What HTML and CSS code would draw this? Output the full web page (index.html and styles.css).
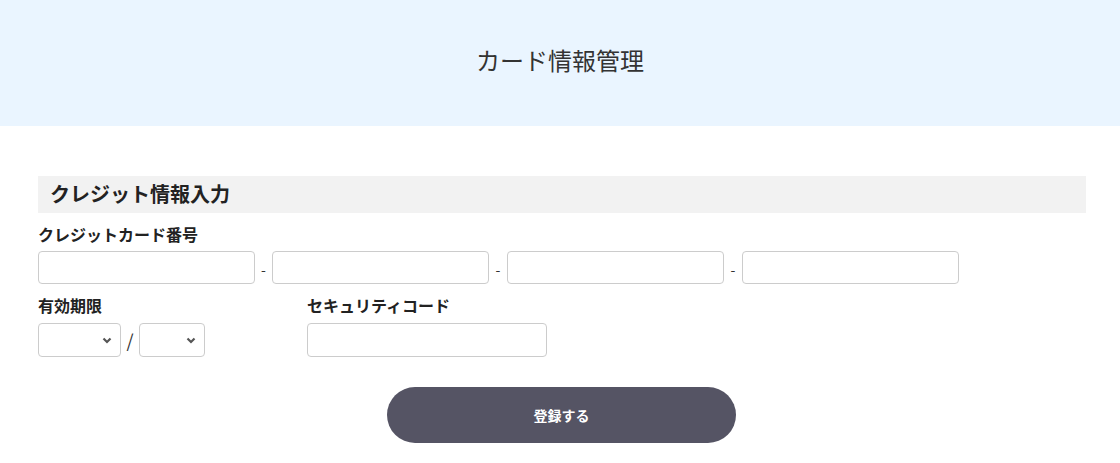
FILE: index.html
```html
<!DOCTYPE html>
<html lang="ja">
<head>
    <meta charset="UTF-8">
    <title>カード情報管理</title>
    <link rel="stylesheet" href="styles.css">
</head>
<body>
<div id="header">
    <h1>カード情報管理</h1>
</div>
<div id="content">
    <h2 class="section-title">クレジット情報入力</h2>
    <div class="field">
        <label class="label">クレジットカード番号</label>
        <div class="card-row">
            <input type="text" class="text-input card-input">
            <span class="sep">-</span>
            <input type="text" class="text-input card-input">
            <span class="sep">-</span>
            <input type="text" class="text-input card-input">
            <span class="sep">-</span>
            <input type="text" class="text-input card-input">
        </div>
    </div>
    <div class="field-row">
        <div class="field expiry">
            <label class="label">有効期限</label>
            <div class="expiry-row">
                <select class="select month"><option></option></select>
                <span class="slash">/</span>
                <select class="select year"><option></option></select>
            </div>
        </div>
        <div class="field">
            <label class="label">セキュリティコード</label>
            <input type="text" class="text-input code-input">
        </div>
    </div>
    <div class="actions">
        <button class="submit">登録する</button>
    </div>
</div>
</body>
</html>
```
FILE: styles.css
```css
* {
    margin: 0;
    padding: 0;
    box-sizing: border-box;
}

body {
    font-family: "Noto Sans CJK JP", "Noto Sans", sans-serif;
    color: #222;
    background-color: #fff;
}

#header {
    height: 126px;
    background-color: #eaf5ff;
    display: flex;
    align-items: center;
    justify-content: center;
    padding-bottom: 8px;
}

#header h1 {
    font-size: 24px;
    font-weight: 400;
    color: #333;
}

#content {
    padding: 50px 34px 20px 38px;
}

.section-title {
    height: 37px;
    line-height: 35px;
    background-color: #f2f2f2;
    font-size: 20px;
    font-weight: 700;
    padding-left: 12px;
    color: #222;
}

.field {
    margin-top: 9px;
}

.label {
    display: block;
    font-size: 16px;
    font-weight: 700;
    line-height: 24px;
    margin-bottom: 5px;
}

.card-row {
    display: flex;
    align-items: center;
}

.text-input {
    height: 33px;
    border: 1px solid #ccc;
    border-radius: 4px;
    background-color: #fff;
    padding: 0 8px;
    font-size: 14px;
}

.card-input {
    width: 217px;
}

.sep {
    width: 17px;
    text-align: center;
    font-size: 14px;
    color: #333;
    padding-top: 2px;
}

.card-row .sep:nth-of-type(2),
.card-row .sep:nth-of-type(3) {
    width: 18px;
}

.field-row {
    display: flex;
}

.field-row .field:first-child {
    width: 269px;
}

.field-row .label {
    margin-bottom: 6px;
}

.expiry-row {
    display: flex;
    align-items: center;
}

.select {
    height: 34px;
    border: 1px solid #ccc;
    border-radius: 4px;
    background-color: #fff;
    font-size: 14px;
    appearance: none;
    -webkit-appearance: none;
    background-image: url("data:image/svg+xml,%3Csvg xmlns='http://www.w3.org/2000/svg' width='10' height='7' viewBox='0 0 10 7'%3E%3Cpath d='M1.5 1.5l3.5 3.5 3.5-3.5' fill='none' stroke='%23555' stroke-width='2.2'/%3E%3C/svg%3E");
    background-repeat: no-repeat;
    background-position: right 8px center;
}

.month {
    width: 83px;
}

.year {
    width: 66px;
}

.slash {
    width: 18px;
    text-align: center;
    font-size: 18px;
    color: #333;
}

.code-input {
    width: 240px;
    height: 34px;
}

.actions {
    margin-top: 30px;
    padding-right: 1px;
    display: flex;
    justify-content: center;
}

.submit {
    width: 349px;
    height: 56px;
    border: none;
    border-radius: 28px;
    background-color: #555464;
    color: #fff;
    font-family: "Noto Sans CJK JP", sans-serif;
    font-size: 14px;
    font-weight: 700;
    cursor: pointer;
}
```
